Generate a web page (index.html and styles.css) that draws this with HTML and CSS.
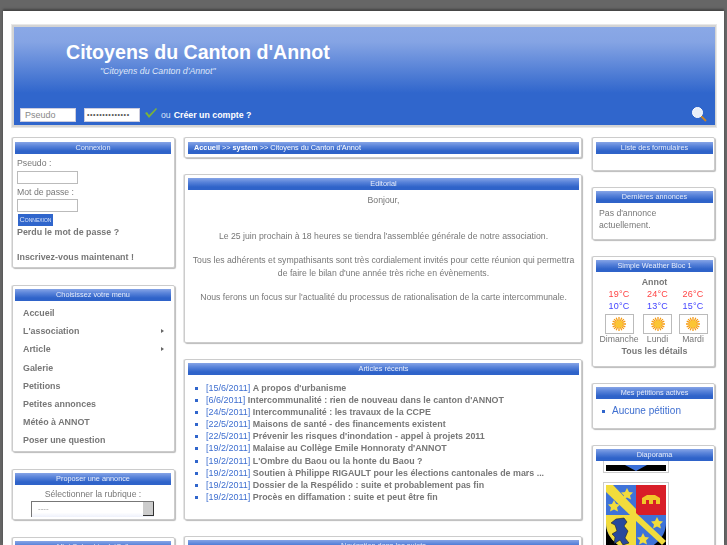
FILE: index.html
```html
<!DOCTYPE html>
<html lang="fr">
<head>
<meta charset="utf-8">
<title>Citoyens du Canton d'Annot</title>
<link rel="stylesheet" href="styles.css">
</head>
<body>
<div class="page">
  <header class="header">
    <div class="site-title">Citoyens du Canton d'Annot</div>
    <div class="site-slogan">"Citoyens du Canton d'Annot"</div>
    <div class="loginbar">
      <span class="fake-input">Pseudo</span>
      <span class="fake-input pass">••••••••••••••</span>
      <svg class="check" width="12" height="10" viewBox="0 0 12 10"><path d="M0 5l2-1 2 3 7-7 1 1-8 9z" fill="#7ab23a"/></svg>
      <span class="ou">ou</span>
      <b class="create">Créer un compte ?</b>
      <svg class="loupe" width="15" height="15" viewBox="0 0 15 15"><path d="M9 9l5 5" stroke="#c8862a" stroke-width="2"/><circle cx="5.500" cy="5.500" r="5" fill="#e8eef8" stroke="#fff"/></svg>
    </div>
  </header>
  <div class="columns">
    <div class="col left">
      <section class="box first b-login">
        <h3 class="title">Connexion</h3>
        <div class="login">
          <div class="lbl">Pseudo :</div>
          <div class="field"></div>
          <div class="lbl">Mot de passe :</div>
          <div class="field second"></div>
          <div class="btn">Connexion</div>
          <div class="strong">Perdu le mot de passe ?</div>
          <div class="strong gap">Inscrivez-vous maintenant !</div>
        </div>
      </section>
      <section class="box b-menu">
        <h3 class="title">Choisissez votre menu</h3>
        <ul class="menu">
          <li>Accueil</li>
          <li class="sub">L'association</li>
          <li class="sub">Article</li>
          <li>Galerie</li>
          <li>Petitions</li>
          <li>Petites annonces</li>
          <li>Météo à ANNOT</li>
          <li>Poser une question</li>
        </ul>
      </section>
      <section class="box b-annonce">
        <h3 class="title">Proposer une annonce</h3>
        <div class="rubrique">Sélectionner la rubrique :</div>
        <div class="select"><span>----</span><i class="arrowbtn"></i></div>
      </section>
      <section class="box">
        <h3 class="title">Mini Calendrier (eiCal)</h3>
      </section>
    </div>
    <div class="col center">
      <section class="box first crumb">
        <div class="title path"><b>Accueil</b> &gt;&gt; <b>system</b> &gt;&gt; Citoyens du Canton d'Annot</div>
      </section>
      <section class="box edito">
        <h3 class="title">Editorial</h3>
        <p class="edito-text">Bonjour,<br><br><br>Le 25 juin prochain à 18 heures se tiendra l'assemblée générale de notre association.<br><br>Tous les adhérents et sympathisants sont très cordialement invités pour cette réunion qui permettra de faire le bilan d'une année très riche en évènements.<br><br>Nous ferons un focus sur l'actualité du processus de rationalisation de la carte intercommunale.</p>
      </section>
      <section class="box articles">
        <h3 class="title">Articles récents</h3>
        <ul class="news">
          <li><span>[15/6/2011]</span> <b>A propos d'urbanisme</b></li>
          <li><span>[6/6/2011]</span> <b>Intercommunalité : rien de nouveau dans le canton d'ANNOT</b></li>
          <li><span>[24/5/2011]</span> <b>Intercommunalité : les travaux de la CCPE</b></li>
          <li><span>[22/5/2011]</span> <b>Maisons de santé - des financements existent</b></li>
          <li><span>[22/5/2011]</span> <b>Prévenir les risques d'inondation - appel à projets 2011</b></li>
          <li><span>[19/2/2011]</span> <b>Malaise au Collège Emile Honnoraty d'ANNOT</b></li>
          <li><span>[19/2/2011]</span> <b>L'Ombre du Baou ou la honte du Baou ?</b></li>
          <li><span>[19/2/2011]</span> <b>Soutien à Philippe RIGAULT pour les élections cantonales de mars ...</b></li>
          <li><span>[19/2/2011]</span> <b>Dossier de la Respélido : suite et probablement pas fin</b></li>
          <li><span>[19/2/2011]</span> <b>Procès en diffamation : suite et peut être fin</b></li>
        </ul>
      </section>
      <section class="box">
        <h3 class="title">Navigation dans les sujets</h3>
      </section>
    </div>
    <div class="col right">
      <section class="box first forms">
        <h3 class="title">Liste des formulaires</h3>
      </section>
      <section class="box b-dern">
        <h3 class="title">Dernières annonces</h3>
        <p class="noad">Pas d'annonce actuellement.</p>
      </section>
      <section class="box b-weather">
        <h3 class="title">Simple Weather Bloc 1</h3>
        <div class="city">Annot</div>
        <div class="weather">
          <div class="day"><div class="hot">19°C</div><div class="cold">10°C</div><div class="sunbox"><svg class="sun" viewBox="0 0 20 20"><use href="#sunshape"/></svg></div><div class="dname">Dimanche</div></div>
          <div class="day"><div class="hot">24°C</div><div class="cold">13°C</div><div class="sunbox"><svg class="sun" viewBox="0 0 20 20"><use href="#sunshape"/></svg></div><div class="dname">Lundi</div></div>
          <div class="day"><div class="hot">26°C</div><div class="cold">15°C</div><div class="sunbox"><svg class="sun" viewBox="0 0 20 20"><use href="#sunshape"/></svg></div><div class="dname">Mardi</div></div>
        </div>
        <div class="details">Tous les détails</div>
      </section>
      <section class="box b-pet">
        <h3 class="title">Mes pétitions actives</h3>
        <ul class="petitions"><li>Aucune pétition</li></ul>
      </section>
      <section class="box">
        <h3 class="title">Diaporama</h3>
        <div class="slide-top"><svg width="60" height="6" viewBox="0 0 60 6"><rect width="60" height="6" fill="#000"/><path d="M19 0h22l-11 6z" fill="#3a6fd8"/></svg></div>
        <div class="slide">
          <svg width="60" height="76" viewBox="0 0 60 76">
            <rect width="60" height="76" fill="#000"/>
            <path d="M0 0H60V38C60 50 52 58 42 64L30 70 18 64C8 58 0 50 0 38Z" fill="#3f73d8"/>
            <rect x="30" width="30" height="30" fill="#d81e28"/>
            <path d="M0 30H30V70L18 64C8 58 0 50 0 38Z" fill="#f2dc3c"/>
            <path d="M0 0H7L30 24V30H24L0 7Z" fill="#f2dc3c"/>
            <path d="M30 28L60 56 56 60 30 36Z" fill="#f2dc3c"/>
            <path d="M36 19V13L41 10H49L54 13V19H50V15H47V19H43V15H40V19Z" fill="#f0c828"/>
            <path d="M10 34L18 33 21 37 18 41 22 46 19 53 23 58 17 60 14 55 8 59 9 52 6 49 11 46 9 40 5 38Z" fill="#27489c" stroke="#111" stroke-width=".5"/>
            <path id="star1" d="M21 3l2 4 4 .5-3 3 1 4-4-2-4 2 1-4-3-3 4-.5zM8 15l2 4 4 .5-3 3 1 4-4-2-4 2 1-4-3-3 4-.5zM51 32l2 4 4 .5-3 3 1 4-4-2-4 2 1-4-3-3 4-.5zM37 48l2 4 4 .5-3 3 1 4-4-2-4 2 1-4-3-3 4-.5z" fill="#f2dc3c"/>
          </svg>
        </div>
      </section>
    </div>
  </div>
</div>
<svg class="defs" width="0" height="0"><defs><g id="sunshape"><g stroke="#f59a12" stroke-width="1.800"><path d="M10 0v20M0 10h20M3 3l14 14M17 3L3 17M6 1l8 18M14 1L6 19M1 6l18 8M19 6L1 14"/></g><circle cx="10" cy="10" r="5.500" fill="#fbc534"/></g></defs></svg>
</body>
</html>
```
FILE: styles.css
```css
* { box-sizing: border-box; }
html, body { margin: 0; height: 545px; overflow: hidden; }
body {
  background: #666;
  font-family: "Liberation Sans", Arial, sans-serif;
  font-size: 8.7px;
  color: #777;
}
.defs { position: absolute; }
.page {
  margin: 11px 3px 0;
  width: 721px;
  height: 534px;
  background: #fff;
  padding: 14px 8px 0 9px;
  box-shadow: 0 -2px 2px #444;
  overflow: hidden;
  filter: blur(.35px);
}
.header {
  height: 102px;
  border: 2px solid #d4d4d4;
  border-right-width: 1px;
  background: linear-gradient(#8aa8e6 0, #85a4e4 15px, #3066cc 66px, #3066cc 100%);
  outline: 1px solid #e8e8e8;
  padding: 14px 0 0 52px;
  color: #fff;
  display: flex;
  flex-direction: column;
}
.site-title { font-size: 19.6px; font-weight: bold; line-height: 22px; }
.site-slogan { font-size: 8.8px; font-style: italic; line-height: 11px; margin: 3px 0 0 34px; color: #dfe6f8; }
.loginbar {
  margin: auto 0 3px -46px;
  display: flex;
  align-items: center;
  height: 14px;
  padding-right: 8px;
}
.fake-input {
  width: 56px;
  height: 14px;
  background: #fff;
  border: 1px solid #ccd;
  color: #888;
  font-size: 9px;
  line-height: 12px;
  padding-left: 4px;
  margin-right: 8px;
}
.fake-input.pass { color: #555; font-size: 7px; padding-left: 2px; letter-spacing: .6px; margin-right: 5px; }
.check { margin: -5px 4px 0 0; }
.ou { color: #d8e2f8; margin-right: 3px; }
.create { font-size: 8.8px; }
.loupe { margin-left: auto; margin-top: -2px; }

.columns { display: flex; margin-top: 10px; gap: 9px; }
.col { display: flex; flex-direction: column; flex: none; gap: 16px; }
.left { width: 163px; gap: 17px; }
.center { width: 398px; margin-right: 1px; }
.right { width: 123px; }
.box {
  background: #fff;
  border: 1px solid #ccc;
  border-radius: 2px;
  box-shadow: 1px 1px 1px #bbb, -1px 0 0 #e4e4e4;
  padding: 3px 2px 0 3px;
}
.first { padding-top: 4px; }
.left .box { padding-left: 2px; padding-right: 3px; }
.right .box { padding-right: 1px; }
.title {
  margin: 0;
  height: 12px;
  line-height: 11px;
  font-size: 7.3px;
  font-weight: normal;
  text-align: center;
  color: #e6ecfa;
  background: linear-gradient(#86a4e6 0, #5a84da 4px, #2f63c9 9px, #2f63c9 100%);
}
.b-login { height: 131px; }
.b-menu { height: 167px; }
.b-annonce { height: 51px; overflow: hidden; }
.login { padding: 0 2px; }
.lbl { line-height: 12px; margin-top: 2px; }
.login .lbl:first-child { margin-top: 3px; }
.field { width: 61px; height: 13px; border: 1px solid #bbb; margin-top: 2px; }
.field.second { margin-top: 1px; }
.btn {
  width: 35px;
  height: 12px;
  background: #3066cc;
  color: #dde6fa;
  font-size: 7.3px;
  font-variant: small-caps;
  line-height: 12px;
  margin: 2px 0 0 1px;
  text-align: center;
}
.strong { font-weight: bold; font-size: 8.9px; line-height: 12px; }
.gap { margin-top: 13px; }
.menu { list-style: none; margin: 0; padding: 3px 7px 0 8px; font-weight: bold; font-size: 8.9px; }
.menu li { height: 18.2px; line-height: 18px; position: relative; }
.menu .sub::after {
  content: "";
  position: absolute;
  right: 0;
  top: 7px;
  border-left: 3px solid #666;
  border-top: 2px solid transparent;
  border-bottom: 2px solid transparent;
}
.rubrique { text-align: center; line-height: 12px; margin-top: 3px; }
.select {
  width: 123px;
  height: 16px;
  margin: 1px 0 0 16px;
  border: 1px solid #777;
  border-right: 0;
  border-bottom: 0;
  background: linear-gradient(#fff 70%, #eef1fb);
  display: flex;
  justify-content: space-between;
  padding-left: 6px;
  font-size: 8px;
  line-height: 14px;
  color: #999;
}
.arrowbtn { width: 11px; height: 14px; background: #ccc; border-right: 1px solid #333; border-bottom: 1px solid #333; }
.crumb { height: 21px; }
.path { text-align: left; padding-left: 6px; color: #fff; }
.edito { height: 169px; }
.edito-text { margin: 0; padding: 4px 4px 0; text-align: center; line-height: 12.1px; }
.articles { height: 161px; }
.news { margin: 0; padding: 7px 0 0 18px; line-height: 12.1px; list-style: none; }
.news li { position: relative; white-space: nowrap; }
.news li::before {
  content: "";
  position: absolute;
  left: -11px;
  top: 5px;
  width: 3px;
  height: 3px;
  background: #3066cc;
}
.news span { color: #3f6fd0; font-size: 9px; }
.news b { font-size: 8.9px; }
.forms { height: 34px; }
.b-dern { height: 53px; }
.noad { margin: 0; padding: 4px 3px 0; line-height: 12px; }
.b-weather { height: 111px; }
.city, .details { text-align: center; font-weight: bold; font-size: 8.9px; line-height: 12px; }
.city { margin-top: 4px; }
.weather { display: grid; grid-template-columns: 40px 37px 34px; padding-left: 3px; }
.day { text-align: center; line-height: 12px; }
.hot { color: #f44; }
.cold { color: #44f; }
.hot, .cold { font-size: 9px; letter-spacing: .2px; }
.sunbox { width: 29px; height: 20px; margin: 2px auto 0; border: 1px solid #bbb; display: flex; align-items: center; justify-content: center; }
.sun { width: 14px; height: 14px; }
.dname { margin-top: -1px; }
.b-pet { height: 46px; }
.petitions { margin: 0; padding: 6px 0 0 16px; list-style: none; color: #3f6fd0; line-height: 12px; font-size: 10px; }
.petitions li { position: relative; }
.petitions li::before { content: ""; position: absolute; left: -10px; top: 5px; width: 3px; height: 3px; background: #3066cc; }
.slide-top { width: 66px; height: 12px; margin-left: 7px; border: 1px solid #ccc; border-top: 0; padding: 4px 2px 0; display: flex; }
.slide { width: 66px; margin: 9px 0 0 7px; border: 1px solid #ccc; padding: 2px; display: flex; }
```
